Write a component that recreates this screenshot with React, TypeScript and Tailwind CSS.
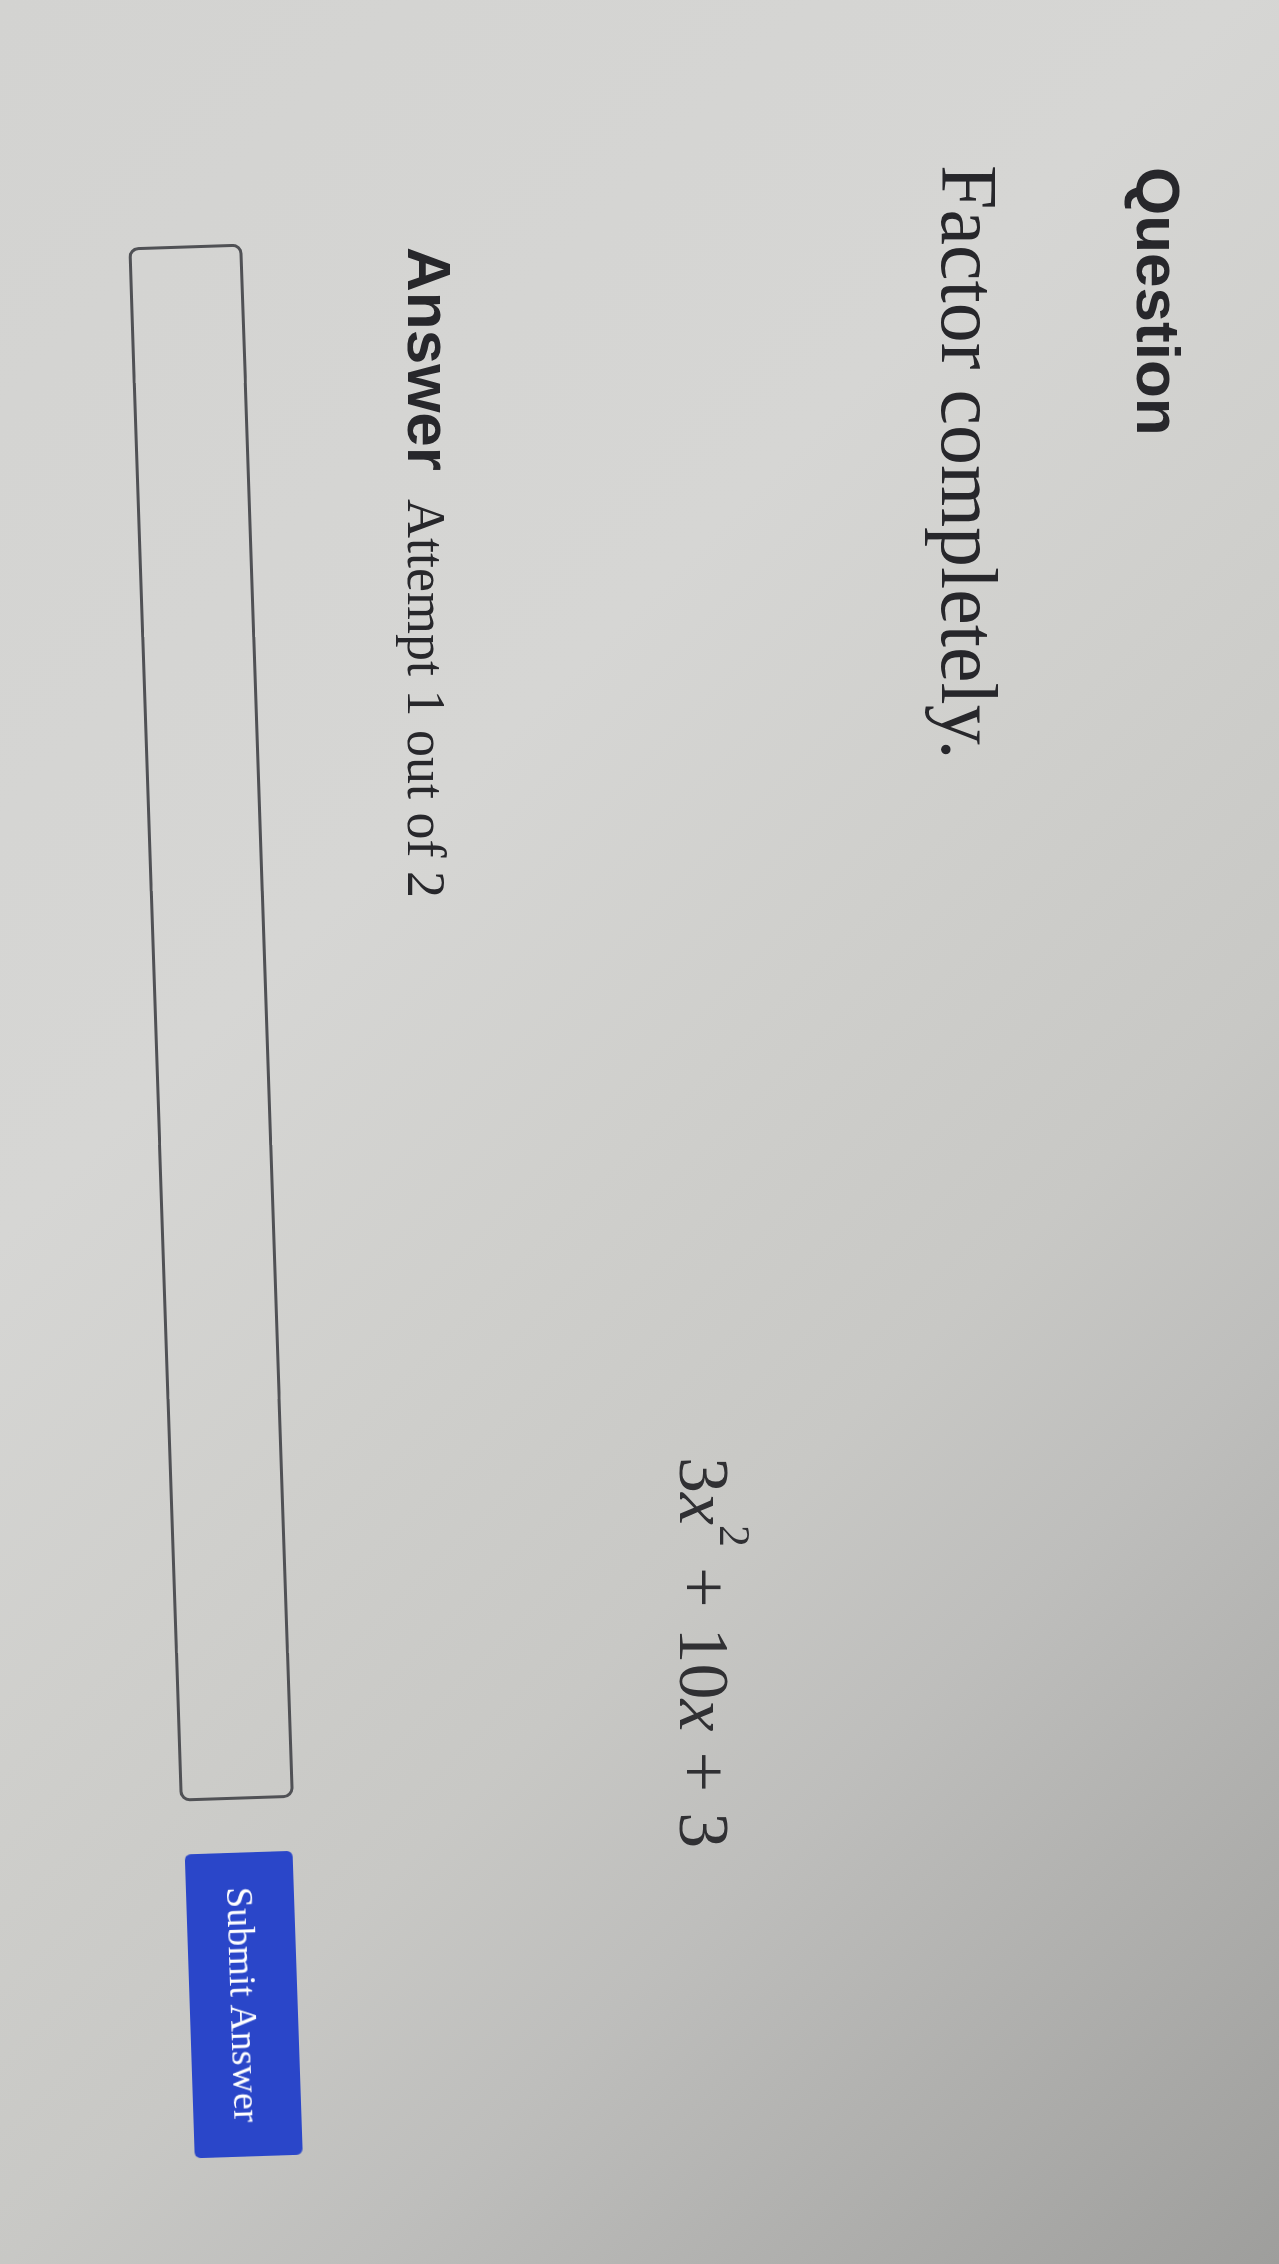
export default function App() {
  // The photo shows the question page turned a quarter turn, so the page is laid out
  // landscape (2264 x 1279) and rotated into the portrait viewport.
  return (
    <div className="h-[2264px] w-[1279px] overflow-hidden bg-[linear-gradient(135deg,#d3d3d1_0%,#d6d6d4_35%,#cfcfcc_50%,#c8c8c5_64%,#bebebc_74%,#aeaeac_87%,#9e9e9c_100%)]">
      <main className="flex h-[1279px] w-[2264px] origin-top-left flex-col pt-[90px] text-[#27272b] blur-[0.5px] [transform:translateX(1279px)_rotate(90deg)]">
        <h2 className="pl-[167px] text-[62px] font-bold leading-none [font-family:'Liberation_Sans',Arial,sans-serif]">
          Question
        </h2>

        <p className="mt-[118px] pl-[165px] text-[80px] leading-none [font-family:'Liberation_Serif','Times_New_Roman',serif]">
          Factor completely.
        </p>

        <div className="mt-[189px] whitespace-nowrap pl-[1457px] text-[72px] leading-none text-[#303033] [font-family:'Liberation_Serif','Times_New_Roman',serif]">
          <span>3</span>
          <span className="italic">x</span>
          <span className="relative -top-[40px] text-[44px]">2</span>
          <span className="mx-[20px]">+</span>
          <span>10</span>
          <span className="italic">x</span>
          <span className="mx-[20px]">+</span>
          <span>3</span>
        </div>

        <div className="mt-[208px] flex items-baseline pl-[247px]">
          <span className="text-[62px] font-bold leading-none [font-family:'Liberation_Sans',Arial,sans-serif]">
            Answer
          </span>
          <span className="ml-[28px] text-[54px] leading-none [font-family:'Liberation_Serif','Times_New_Roman',serif]">
            Attempt 1 out of 2
          </span>
        </div>

        <div className="mt-[124px] ml-[245px] flex w-fit items-center gap-[53px] self-start -rotate-[1.9deg]">
          <input
            type="text"
            aria-label="Answer"
            className="h-[114px] w-[1555px] rounded-[10px] border-[3px] border-[#505155] bg-transparent outline-none"
          />
          <button className="h-[108px] w-[304px] rounded-[6px] bg-[#2a46c9] text-[38px] leading-none text-white [font-family:'Liberation_Serif','Times_New_Roman',serif]">
            Submit Answer
          </button>
        </div>
      </main>
    </div>
  );
}
